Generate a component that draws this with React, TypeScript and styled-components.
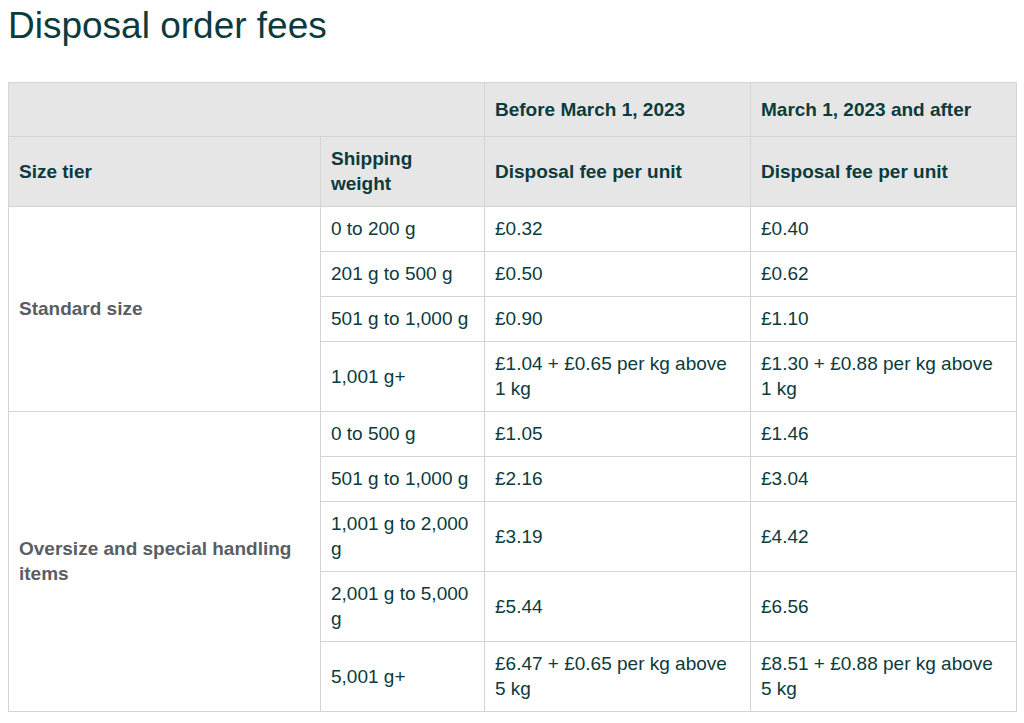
import styled, { createGlobalStyle } from "styled-components";

const GlobalStyle = createGlobalStyle`
  body {
    margin: 0;
    background: #ffffff;
    font-family: "Liberation Sans", Arial, sans-serif;
  }
`;

const Page = styled.div`
  padding: 6px 8px 8px;
`;

const Title = styled.h1`
  margin: 0 0 36px;
  font-size: 37px;
  line-height: 40px;
  font-weight: 400;
  color: #0c3b3d;
`;

const Table = styled.table`
  width: 1009px;
  border-collapse: collapse;
  table-layout: fixed;
  font-size: 19px;
  line-height: 25px;
  color: #0c3b3d;
`;

const HeadCell = styled.th<{ $tall?: boolean }>`
  background: #e6e6e6;
  border: 1px solid #d4d4d4;
  text-align: left;
  vertical-align: middle;
  font-weight: 700;
  padding: ${(p) => (p.$tall ? "14px 10px" : "9px 10px 10px")};
`;

const Cell = styled.td<{ $tier?: boolean }>`
  border: 1px solid #d4d4d4;
  vertical-align: middle;
  padding: 9px 10px 10px;
  font-weight: ${(p) => (p.$tier ? 700 : 400)};
  color: ${(p) => (p.$tier ? "#595e62" : "#0c3b3d")};
`;

type Row = { weight: string; before: string; after: string };

const standard: Row[] = [
  { weight: "0 to 200 g", before: "£0.32", after: "£0.40" },
  { weight: "201 g to 500 g", before: "£0.50", after: "£0.62" },
  { weight: "501 g to 1,000 g", before: "£0.90", after: "£1.10" },
  {
    weight: "1,001 g+",
    before: "£1.04 + £0.65 per kg above 1 kg",
    after: "£1.30 + £0.88 per kg above 1 kg",
  },
];

const oversize: Row[] = [
  { weight: "0 to 500 g", before: "£1.05", after: "£1.46" },
  { weight: "501 g to 1,000 g", before: "£2.16", after: "£3.04" },
  { weight: "1,001 g to 2,000 g", before: "£3.19", after: "£4.42" },
  { weight: "2,001 g to 5,000 g", before: "£5.44", after: "£6.56" },
  {
    weight: "5,001 g+",
    before: "£6.47 + £0.65 per kg above 5 kg",
    after: "£8.51 + £0.88 per kg above 5 kg",
  },
];

const TierRows = ({ tier, rows }: { tier: string; rows: Row[] }) => (
  <>
    {rows.map((r, i) => (
      <tr key={r.weight}>
        {i === 0 && (
          <Cell $tier rowSpan={rows.length}>
            {tier}
          </Cell>
        )}
        <Cell>{r.weight}</Cell>
        <Cell>{r.before}</Cell>
        <Cell>{r.after}</Cell>
      </tr>
    ))}
  </>
);

export default function App() {
  return (
    <Page>
      <GlobalStyle />
      <Title>Disposal order fees</Title>
      <Table>
        <colgroup>
          <col style={{ width: 312 }} />
          <col style={{ width: 164 }} />
          <col style={{ width: 266 }} />
          <col style={{ width: 266 }} />
        </colgroup>
        <thead>
          <tr>
            <HeadCell $tall colSpan={2} />
            <HeadCell $tall>Before March 1, 2023</HeadCell>
            <HeadCell $tall>March 1, 2023 and after</HeadCell>
          </tr>
          <tr>
            <HeadCell>Size tier</HeadCell>
            <HeadCell>Shipping weight</HeadCell>
            <HeadCell>Disposal fee per unit</HeadCell>
            <HeadCell>Disposal fee per unit</HeadCell>
          </tr>
        </thead>
        <tbody>
          <TierRows tier="Standard size" rows={standard} />
          <TierRows tier="Oversize and special handling items" rows={oversize} />
        </tbody>
      </Table>
    </Page>
  );
}
